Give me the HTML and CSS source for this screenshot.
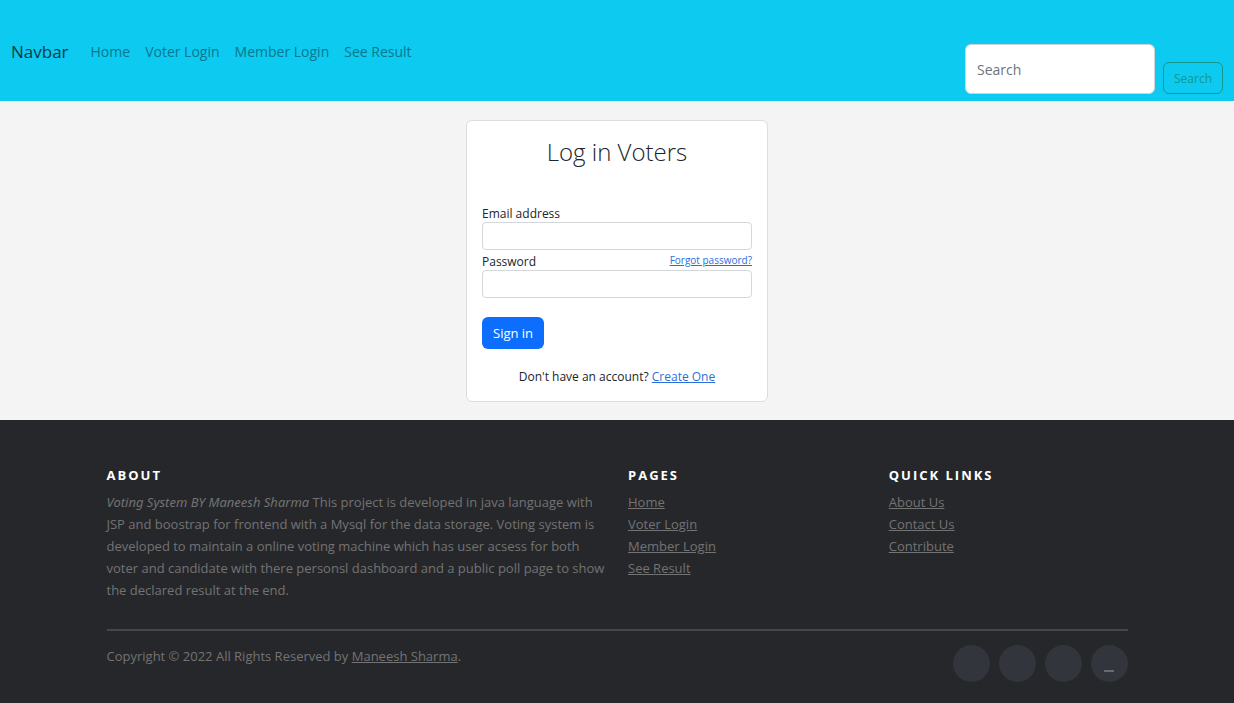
FILE: index.html
```html
<!DOCTYPE html>
<html lang="en">
<head>
<meta charset="utf-8">
<meta name="viewport" content="width=device-width, initial-scale=1">
<title>Log in Voters</title>
<link rel="stylesheet" href="styles.css">
</head>
<body>
<header class="navbar">
  <a class="brand" href="#">Navbar</a>
  <nav class="nav">
    <a href="#">Home</a>
    <a href="#">Voter Login</a>
    <a href="#">Member Login</a>
    <a href="#">See Result</a>
  </nav>
  <form class="search" role="search">
    <input class="search-input" type="search" placeholder="Search" aria-label="Search">
    <button class="search-button" type="submit">Search</button>
  </form>
</header>
<main class="main">
  <section class="card">
    <h1 class="card-title">Log in Voters</h1>
    <form>
      <div class="label-row"><label for="email">Email address</label></div>
      <input class="field" id="email" type="email">
      <div class="label-row"><label for="password">Password</label><a class="forgot" href="#">Forgot password?</a></div>
      <input class="field" id="password" type="password">
      <button class="sign-in" type="submit">Sign in</button>
      <p class="sign-up">Don't have an account? <a href="#">Create One</a></p>
    </form>
  </section>
</main>
<footer class="footer">
  <div class="container">
    <div class="columns">
      <section class="about">
        <h2 class="heading">About</h2>
        <p><i>Voting System BY Maneesh Sharma</i> This project is developed in java language with JSP and boostrap for frontend with a Mysql for the data storage. Voting system is developed to maintain a online voting machine which has user acsess for both voter and candidate with there personsl dashboard and a public poll page to show the declared result at the end.</p>
      </section>
      <section>
        <h2 class="heading">Pages</h2>
        <ul class="links">
          <li><a href="#">Home</a></li>
          <li><a href="#">Voter Login</a></li>
          <li><a href="#">Member Login</a></li>
          <li><a href="#">See Result</a></li>
        </ul>
      </section>
      <section>
        <h2 class="heading">Quick Links</h2>
        <ul class="links">
          <li><a href="#">About Us</a></li>
          <li><a href="#">Contact Us</a></li>
          <li><a href="#">Contribute</a></li>
        </ul>
      </section>
    </div>
    <div class="bottom">
      <p>Copyright © 2022 All Rights Reserved by <a href="#">Maneesh Sharma</a>.</p>
      <ul class="social">
        <li><a href="#" aria-label="Facebook"></a></li>
        <li><a href="#" aria-label="Twitter"></a></li>
        <li><a href="#" aria-label="Dribbble"></a></li>
        <li><a href="#" aria-label="LinkedIn"><svg width="10" height="2" viewBox="0 0 10 2" aria-hidden="true"><path d="M0 1h10" stroke="#6a6b70" stroke-width="2"/></svg></a></li>
      </ul>
    </div>
  </div>
</footer>
</body>
</html>
```
FILE: styles.css
```css
* { box-sizing: border-box; }
body {
  margin: 0;
  background: #f4f4f4;
  color: #212529;
  font-family: "Open Sans", "Noto Sans", sans-serif;
  font-size: 14px;
  line-height: 22px;
}
h1, h2, p, ul { margin: 0; padding: 0; }
ul { list-style: none; }
input, button { font: inherit; }

.navbar {
  display: flex;
  align-items: center;
  min-height: 101px;
  padding: 9px 11px 7px;
  background: #0dcaf0;
}
.brand { margin-right: 22px; color: #0b3b46; font-size: 17px; text-decoration: none; }
.nav { display: flex; gap: 15px; flex: 1; }
.nav a { color: #07788e; text-decoration: none; }
.search { display: flex; align-items: flex-end; align-self: flex-end; gap: 8px; }
.search-input {
  width: 190px;
  height: 50px;
  padding: 0 11px;
  border: 1px solid #ced4da;
  border-radius: 6px;
  background: #fff;
}
.search-input::placeholder { color: #6c757d; opacity: 1; }
.search-button {
  height: 32px;
  padding: 1px 10px 0;
  border: 1px solid #12988b;
  border-radius: 6px;
  background: transparent;
  color: #12988b;
  font-size: 12px;
}

.main { display: flex; justify-content: center; padding: 19px 15px 18px; }
.card {
  width: 302px;
  padding: 14px 15px;
  border: 1px solid #dddddf;
  border-radius: 6px;
  background: #fff;
  font-size: 12px;
}
.card a { color: #2a6fd9; }
.card-title { margin-bottom: 33px; font-size: 24px; font-weight: 300; line-height: 34px; text-align: center; }
.label-row { display: flex; justify-content: space-between; padding-top: 3px; line-height: 17px; }
.forgot { font-size: 10px; line-height: 14px; }
.field {
  display: block;
  width: 100%;
  height: 28px;
  padding: 4px 8px;
  border: 1px solid #d3d7db;
  border-radius: 4px;
  background: #fff;
}
.sign-in {
  display: block;
  height: 32px;
  margin-top: 19px;
  padding: 0 11px;
  border: 0;
  border-radius: 6px;
  background: #0d6efd;
  color: #fff;
  font-size: 13px;
}
.sign-up { margin-top: 18px; line-height: 20px; text-align: center; }

.footer { padding: 45px 15px 22px; background: #26272b; color: #737373; font-size: 13px; }
.footer a { color: #737373; }
.footer i { font-family: "Noto Sans", "Open Sans", sans-serif; }
.container { max-width: 1021px; margin: 0 auto; }
.columns { display: grid; grid-template-columns: repeat(4, 1fr); column-gap: 22px; }
.about { grid-column: span 2; }
.heading {
  margin-bottom: 6px;
  color: #fff;
  font-size: 13px;
  font-weight: 700;
  letter-spacing: 2px;
  line-height: 20px;
  text-transform: uppercase;
}
.bottom {
  display: flex;
  justify-content: space-between;
  margin-top: 28px;
  padding-top: 14px;
  border-top: 2px solid #46474b;
}
.social { display: flex; gap: 9px; }
.social a {
  display: flex;
  align-items: center;
  justify-content: center;
  width: 37px;
  height: 37px;
  padding-top: 14px;
  border-radius: 50%;
  background: #33353d;
}
```
